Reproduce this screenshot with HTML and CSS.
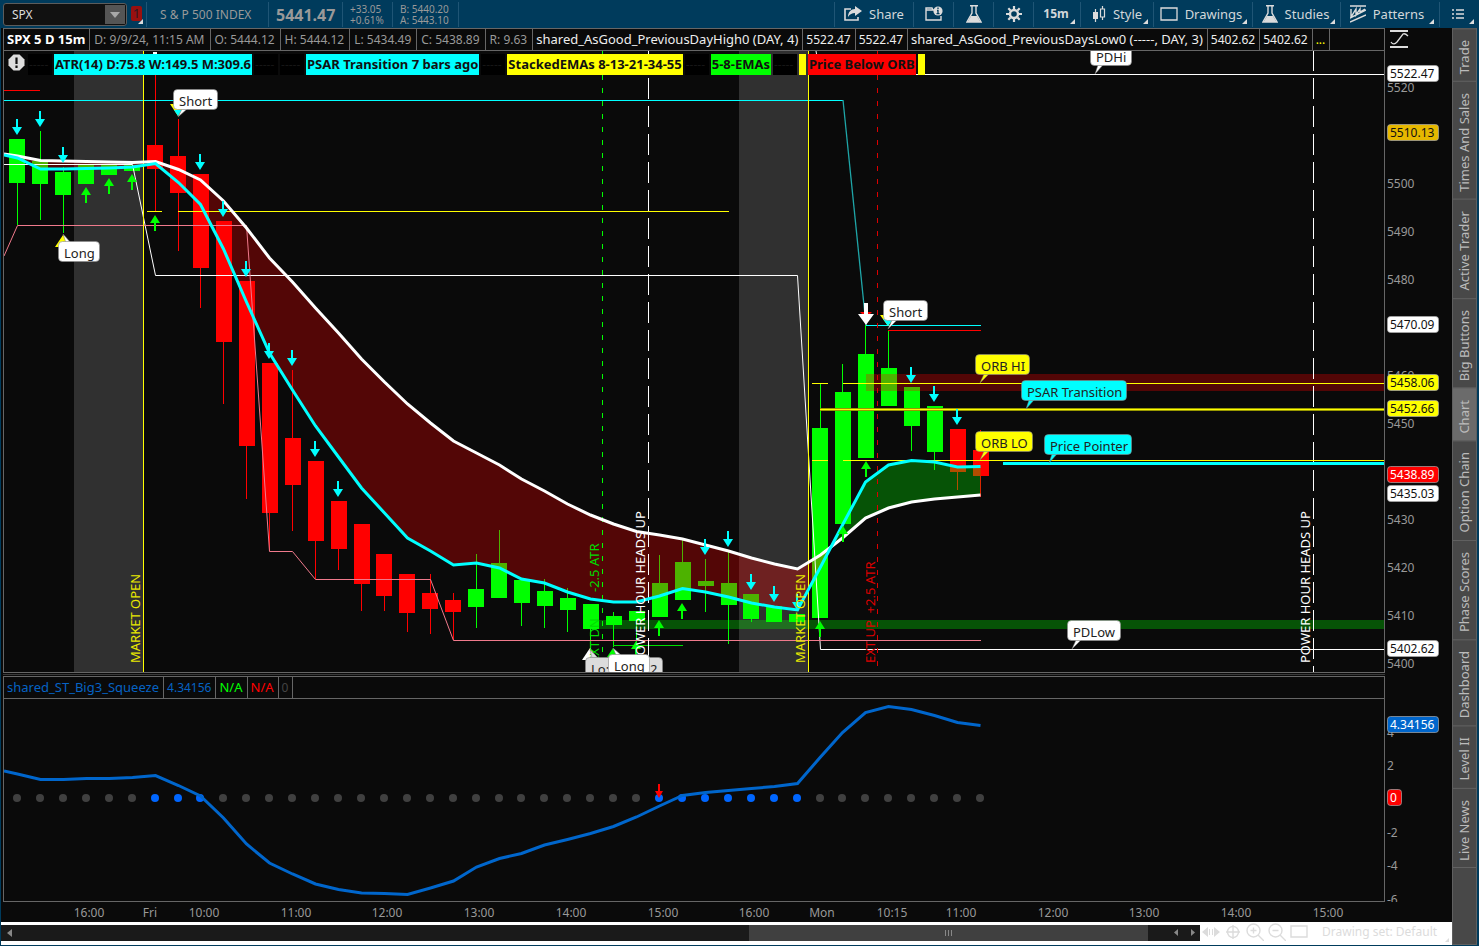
FILE: index.html
```html
<!DOCTYPE html>
<html lang="en">
<head>
<meta charset="utf-8">
<title>SPX Chart</title>
<link rel="stylesheet" href="styles.css">
</head>
<body>
<div class="app">
  <header class="toolbar">
    <div class="symbol-box">
      <input class="symbol-input" aria-label="Symbol" value="SPX">
      <button class="symbol-drop" aria-label="Choose symbol"><svg width="10" height="6"><path d="M0 0h10l-5 6z" fill="#a8a8a8"/></svg></button>
    </div>
    <button class="link-badge corner">1</button>
    <div class="quote name">S &amp; P 500 INDEX</div>
    <div class="quote last">5441.47</div>
    <div class="quote pair"><span>+33.05</span><span>+0.61%</span></div>
    <div class="quote pair"><span>B: 5440.20</span><span>A: 5443.10</span></div>
    <div class="quote spacer"></div>
    <button class="tool share"><svg width="18" height="16" viewBox="0 0 18 16"><path d="M7 3H1v11h13v-3" fill="none" stroke="#dcdcdc" stroke-width="1.6"/><path d="M11 0l7 5-7 5V7C8 7 6 8 4 11c0-5 3-8 7-8z" fill="#dcdcdc"/></svg>Share</button>
    <button class="tool" aria-label="Chart info"><svg width="18" height="16" viewBox="0 0 18 16"><path d="M10 4H8L7 2H1v12h15v-4M1 4h8" fill="none" stroke="#dcdcdc" stroke-width="1.4"/><circle cx="13" cy="5" r="4.6" fill="#dcdcdc"/><path d="M13 1.500v1.500M12 4.500h1v3M11.500 7.700h3" stroke="#003b5c" stroke-width="1.3" fill="none"/></svg></button>
    <button class="tool" aria-label="Studies flask"><svg width="16" height="18" viewBox="0 0 16 18"><path d="M4 .7h8M6 1v7L1 17h14L10 8V1" fill="none" stroke="#dcdcdc" stroke-width="1.4"/><path d="M5 11h6l3.500 6H1.500z" fill="#dcdcdc"/></svg></button>
    <button class="tool" aria-label="Chart settings"><svg width="16" height="16" viewBox="0 0 16 16"><g stroke="#dcdcdc" fill="none"><circle cx="8" cy="8" r="4" stroke-width="2.400"/><path d="M8 0v3M8 13v3M0 8h3M13 8h3M2.300 2.300l2.200 2.200M11.500 11.500l2.200 2.200M2.300 13.700l2.200-2.200M11.500 4.500l2.200-2.200" stroke-width="2.200"/></g></svg></button>
    <button class="tool bold corner frame">15m</button>
    <button class="tool corner style"><svg width="14" height="16" viewBox="0 0 14 16"><path d="M3.500 3v13M10.500 0v3M10.500 11v3" stroke="#dcdcdc" stroke-width="1.200"/><path d="M1 6h5v7H1z" fill="#dcdcdc"/><path d="M8.500 3h4v8h-4z" fill="none" stroke="#dcdcdc" stroke-width="1.200"/></svg>Style</button>
    <button class="tool corner drawings"><svg width="18" height="14" viewBox="0 0 18 14"><path d="M1 1h16v12H1z" fill="none" stroke="#dcdcdc" stroke-width="1.300"/></svg>Drawings</button>
    <button class="tool corner studies"><svg width="16" height="18" viewBox="0 0 16 18"><path d="M4 .7h8M6 1v7L1 17h14L10 8V1" fill="none" stroke="#dcdcdc" stroke-width="1.4"/><path d="M5 11h6l3.500 6H1.500z" fill="#dcdcdc"/></svg>Studies</button>
    <button class="tool corner patterns"><svg width="16" height="18" viewBox="0 0 16 18"><path d="M0 1h16M0 17L16 10M0 13L16 5M1 4v8l5-8v6l4-6v3l5-3" fill="none" stroke="#dcdcdc" stroke-width="1.400"/></svg>Patterns</button>
    <button class="tool corner menu" aria-label="Menu"><svg width="12" height="12" viewBox="0 0 12 12"><path d="M0 2h2M0 6h2M0 10h2M4 2h8M4 6h8M4 10h8" stroke="#dcdcdc" stroke-width="1.500"/></svg></button>
  </header>

  <div class="main">
    <main class="left">
      <div class="workspace">
        <div class="plots">
          <section class="panel">
            <div class="panel-head">
              <span class="strong">SPX 5 D 15m</span><span class="ohlc">D: 9/9/24, 11:15 AM</span><span class="ohlc">O: 5444.12</span><span class="ohlc">H: 5444.12</span><span class="ohlc">L: 5434.49</span><span class="ohlc">C: 5438.89</span><span class="ohlc">R: 9.63</span><span class="white study">shared_AsGood_PreviousDayHigh0 (DAY, 4)</span><span class="white">5522.47</span><span class="white">5522.47</span><span class="white study">shared_AsGood_PreviousDaysLow0 (-----, DAY, 3)</span><span class="white">5402.62</span><span class="white">5402.62</span><span class="yellow">...</span>
            </div>
            <div class="plot">
              <svg id="price" viewBox="4 51 1380 621" role="img" aria-label="SPX 15 minute price chart"></svg>
              <div class="labels">
                <svg width="18" height="18" viewBox="0 0 18 18"><path d="M5.500 0.500h6l5 5v6l-5 5h-6l-5-5v-6z" fill="#dedede"/><path d="M8.500 3.500v6.500M8.500 11.500v2.500" stroke="#111" stroke-width="2.200"/></svg>
                <span class="tag none">-----</span><span class="tag cyan">ATR(14) D:75.8 W:149.5 M:309.6</span><span class="tag none">-----</span><span class="tag none">-----</span><span class="tag cyan">PSAR Transition 7 bars ago</span><span class="tag none">-----</span><span class="tag yel">StackedEMAs 8-13-21-34-55</span><span class="tag none">-----</span><span class="tag grn">5-8-EMAs</span><span class="tag none">-----</span><span class="tag yel bar"></span><span class="tag red">Price Below ORB</span><span class="tag yel bar"></span>
              </div>
            </div>
          </section>
          <div class="splitter"></div>
          <section class="panel">
            <div class="panel-head">
              <span class="blue study">shared_ST_Big3_Squeeze</span><span class="blue">4.34156</span><span class="green study">N/A</span><span class="redtext study">N/A</span><span class="dim">0</span>
            </div>
            <div class="plot"><svg id="squeeze" viewBox="4 699 1380 202" role="img" aria-label="Squeeze momentum"></svg></div>
          </section>
          <svg id="times" class="times" viewBox="3 902 1382 20"></svg>
        </div>
        <svg id="axis" class="axis" viewBox="1385 28 67 894"></svg>
      </div>
      <footer class="footer">
        <div class="scroll">
          <div class="scroll-side"><svg width="5" height="8"><path d="M5 0v8L0 4z" fill="#888"/></svg></div>
          <div class="thumb"><i></i><i></i><i></i></div>
          <div class="scroll-end"><svg width="4" height="8"><path d="M4 0v7L0 3.500z" fill="#888"/></svg><svg width="4" height="8"><path d="M0 0v7l4-3.500z" fill="#888"/></svg></div>
        </div>
        <div class="foot-tools">
          <button aria-label="Pan"><svg width="18" height="18" viewBox="0 0 18 18"><path d="M6 4v10L0 9zM12 4v10l6-5z" fill="#dcdcdc"/><path d="M7.500 6v6M10.500 6v6" stroke="#dcdcdc"/></svg></button>
          <button aria-label="Crosshair"><svg width="18" height="18" viewBox="0 0 18 18"><g fill="none" stroke="#dcdcdc" stroke-width="1.400"><circle cx="9" cy="9" r="5.500"/><path d="M9 2v14M2 9h14"/></g></svg></button>
          <button aria-label="Zoom in"><svg width="18" height="18" viewBox="0 0 18 18"><g fill="none" stroke="#dcdcdc" stroke-width="1.400"><circle cx="7.500" cy="7.500" r="6.500"/><path d="M12 12l6 6M4.500 7.500h6M7.500 4.500v6"/></g></svg></button>
          <button aria-label="Zoom out"><svg width="18" height="18" viewBox="0 0 18 18"><g fill="none" stroke="#dcdcdc" stroke-width="1.400"><circle cx="7.500" cy="7.500" r="6.500"/><path d="M12 12l6 6M4.500 7.500h6"/></g></svg></button>
          <button aria-label="Fit"><svg width="18" height="18" viewBox="0 0 18 18"><path d="M1 3h16v11H1z" fill="none" stroke="#dcdcdc" stroke-width="1.400"/></svg></button>
          <button class="set">Drawing set: Default</button>
          <svg class="grip" width="4" height="4"><path d="M4 0v4H0z" fill="#dcdcdc"/></svg>
        </div>
      </footer>
    </main>
    <nav class="tabs">
      <button>Trade</button><button>Times And Sales</button><button>Active Trader</button><button>Big Buttons</button><button class="on">Chart</button><button>Option Chain</button><button>Phase Scores</button><button>Dashboard</button><button>Level II</button><button>Live News</button>
      <div class="tabs-rest"></div>
    </nav>
  </div>
</div>
<script src="chart.js"></script>
</body>
</html>
```

FILE: styles.css
```css
* { box-sizing: border-box; }
html, body { height: 100%; margin: 0; }
body { background: #003b5c; font: 12px/16px "Noto Sans", sans-serif; color: #999; }
button, input { font: inherit; color: inherit; border: 0; padding: 0; margin: 0; background: none; }
svg { display: block; flex: none; }
.app { display: flex; flex-direction: column; height: 100vh; overflow: hidden; padding: 0 0 1px 1px; }

.toolbar { display: flex; height: 28px; flex: none; align-items: stretch; padding-left: 2px; white-space: nowrap; font-size: 13px; }
.symbol-box { display: flex; flex: none; width: 124px; height: 23px; margin-top: 3px; background: #111; border: 1px solid #5c5c5c; border-radius: 3px; }
.symbol-input { flex: 1; min-width: 0; padding-left: 8px; font-size: 12px; color: #ddd; }
.symbol-drop { width: 20px; background: #555; margin: 1px; display: flex; align-items: center; justify-content: center; }
.link-badge { width: 11px; height: 15px; margin: 6px 4px 0 4px; background: #99100f; color: #2b1a24; border-radius: 2px; line-height: 15px; }
.corner { position: relative; }
.corner::after { content: ""; position: absolute; right: 5px; bottom: 3px; border: solid transparent; border-width: 0 0 5px 5px; border-bottom-color: #dcdcdc; }
.link-badge.corner::after { right: -1px; bottom: -3px; }
.quote { border-left: 1px solid #1f5575; margin: 2px 0 1px; display: flex; flex-direction: column; justify-content: center; }
.name { width: 122px; padding-left: 13px; font-size: 12px; }
.last { width: 74px; padding-left: 7px; font-size: 16px; font-weight: 700; }
.pair { width: 50px; padding-left: 7px; font-size: 10px; line-height: 11px; }
.pair + .pair { width: 66px; }
.spacer { flex: 1; }
.tool { width: 40px; flex: none; display: flex; align-items: center; justify-content: center; gap: 7px; color: #d2d7da; border-left: 1px solid #1f5575; margin: 2px 0 1px; padding-bottom: 2px; }
.share { width: 79px; }
.bold { font-weight: 700; font-size: 12px; }
.frame { width: 47px; padding-right: 2px; }
.style { width: 73px; }
.drawings { width: 99px; padding-right: 4px; }
.studies { width: 88px; padding-right: 2px; }
.patterns { width: 99px; padding-right: 6px; }
.menu { padding-right: 4px; }

.main { flex: 1; min-height: 0; display: flex; margin-right: 2px; }
.left { flex: 1; min-width: 0; display: flex; flex-direction: column; }
.workspace { flex: 1; min-height: 0; display: flex; background: #0a0a0a; }
.plots { flex: 1; min-width: 0; margin-left: 2px; display: grid; grid-template-rows: minmax(0, 645fr) 3px minmax(0, 226fr) 20px; }
.panel { border: 1px solid #666; display: flex; flex-direction: column; min-width: 0; }
.panel-head { height: 22px; flex: none; display: flex; border-bottom: 1px solid #666; white-space: nowrap; overflow: hidden; line-height: 21px; }
.panel-head span { padding: 0 4px 0 3px; border-right: 1px solid #666; }
.panel-head .ohlc { padding: 0 5px 0 4px; }
.panel-head .strong { color: #fff; font-weight: 700; font-size: 13px; }
.panel-head .study { font-size: 13px; }
.white { color: #eee; }
.yellow { color: #ff0; }
.blue { color: #0663c4; }
.green { color: #0f0; }
.redtext { color: #f00; }
.dim { color: #444; }
.plot { position: relative; flex: 1; min-height: 0; }
.plot > svg { width: 100%; height: 100%; }
.splitter { border: solid #0a0a0a; border-width: 1px 0; background: #3a3a3a; }
.times { width: 100%; height: 100%; }
.axis { width: 67px; height: 100%; }
.labels { position: absolute; left: 4px; top: 3px; display: flex; gap: 2px; height: 21px; line-height: 21px; white-space: nowrap; font-weight: 700; font-size: 13px; color: #111; }
.tag { padding: 0 1px; }
.none { width: 24px; background: #000; color: #161616; font-weight: 400; font-size: 12px; overflow: hidden; }
.cyan { background: #0ff; }
.yel { background: #ff0; }
.grn { background: #0f0; }
.red { background: #f00; }
.bar { width: 7px; padding: 0; }
svg text { font-family: "Noto Sans", sans-serif; font-size: 12px; fill: #999; }
svg .note { font-size: 13px; }

.footer { height: 23px; flex: none; background: #fff; display: flex; align-items: stretch; }
.scroll { flex: 1; margin: 3px 0 4px; background: #1a1a1a; display: flex; }
.scroll-side { flex: 742; display: flex; align-items: center; padding-left: 6px; }
.thumb { flex: 399; background: #404040; display: flex; align-items: center; justify-content: center; gap: 2px; }
.thumb i { width: 1px; height: 6px; background: #888; }
.scroll-end { width: 52px; display: flex; align-items: center; justify-content: flex-end; gap: 13px; padding-right: 5px; }
.foot-tools { flex: none; width: 252px; display: flex; align-items: center; gap: 4px; padding: 0 3px 3px 2px; color: #dcdcdc; font-size: 12px; white-space: nowrap; }
.foot-tools .set { margin-left: 10px; }
.grip { align-self: flex-end; margin-left: auto; }

.tabs { width: 25px; flex: none; display: flex; flex-direction: column; background: #484848; border: solid #5f5f5f; border-width: 0 1px 1px; }
.tabs button { writing-mode: vertical-rl; transform: rotate(180deg); padding: 7px 2px 11px; width: 100%; line-height: 19px; font-size: 13px; color: #bbb; border-bottom: 1px solid #626262; }
.tabs .on { background: #6b6b6b; }
.tabs-rest { flex: 1; border-top: 1px solid #626262; }
```

FILE: chart.js
```js
const NS = 'http://www.w3.org/2000/svg';
const add = (host, tag, attrs, text) => {
  const node = document.createElementNS(NS, tag);
  for (const key in attrs) node.setAttribute(key, attrs[key]);
  if (text !== undefined) node.textContent = text;
  host.appendChild(node);
  return node;
};
const px = i => Math.round(17 + 22.93 * i);
const price = document.getElementById('price');
const rect = (h, x, y, w, height, fill, extra) => add(h, 'rect', { x, y, width: w, height, fill, ...extra });
const line = (h, points, stroke, width = 1, extra) =>
  add(h, 'polyline', { points, fill: 'none', stroke, 'stroke-width': width, ...extra });

/* sessions */
rect(price, 74, 51, 69, 621, '#303030');
rect(price, 739, 51, 69, 621, '#303030');

/* candles: top, bottom, high, low */
const G = '#0f0', R = '#f00';
const candles = [
  [139,183,139,225,G],[161,184,131,220,G],[172,195,167,233,G],[165,184,165,184,G],[165,175,165,175,G],[165,171,165,171,G],
  [145,169,54,211,R],[156,193,119,251,R],[174,268,174,308,R],[221,342,221,404,R],[281,446,281,499,R],[363,513,363,551,R],
  [438,485,370,531,R],[461,541,461,579,R],[501,549,501,570,R],[524,584,524,611,R],[554,596,554,611,R],[574,613,574,632,R],
  [593,609,574,634,R],[600,612,593,640,R],[589,607,554,628,G],[563,598,530,598,G],[580,603,580,626,G],[591,606,579,628,G],
  [598,610,588,632,G],[604,629,604,653,G],[616,625,612,647,G],[611,621,611,642,G],[583,617,555,617,G],[562,600,539,600,G],
  [581,586,559,612,G],[583,605,552,644,G],[594,619,594,622,G],[606,622,606,622,G],[614,622,614,622,G],[428,618,384,618,G],
  [392,524,364,524,G],[354,458,325,458,G],[368,406,330,406,G],[387,426,387,451,G],[406,452,406,470,G],[429,472,429,490,R],
  [450,476,430,497,R]
];
candles.forEach(([t, b, h, l, c], i) => {
  rect(price, px(i), h, 1, l - h, c);
  rect(price, Math.round(9.4 + 22.94 * i), t, 16, b - t, c);
});

/* zones */
rect(price, 866, 374, 518, 17, '#f00', { opacity: 0.3 });
rect(price, 590, 620, 794, 9, '#0f0', { opacity: 0.3 });

/* moving averages and the cloud between them */
const slow = [156,160.5,161,161.5,162,162.5,161.5,169.5,180,201,228,258,282,308,333,359,382,404,423,441,453,465,479,491,504,515,524,531.5,535,539,545,551,558,564,569,555,538,518,508,502,499,497,495];
const fast = [158,169,169,168.5,168,167,163.5,182.5,204.5,249,302,353,390,426,457,488,513,538,551,565,563,568,579,583,592,599,602,602,596,588.5,592,597,603,607,610,567,525,482,465,460.5,462,467,466.5];
const pts = (arr, from = 0, to = arr.length) => arr.slice(from, to).map((y, k) => [px(k + from) + 0.5, y]);
add(price, 'polygon', { points: [[4,154], ...pts(slow, 0, 36), [831,547], ...pts(fast, 0, 36).reverse(), [4,155]].join(' '), fill: '#f00', opacity: 0.3 });
add(price, 'polygon', { points: [[831,547], ...pts(slow, 36), ...pts(fast, 36).reverse()].join(' '), fill: '#0f0', opacity: 0.3 });

/* levels */
line(price, '4,90.5 40,90.5', '#f00');
line(price, '4,100.5 843,100.5', '#0ff');
line(price, '843,100 866,325', '#1fa6a8', 1.3);
line(price, '866,325.5 981,325.5', '#0ff');
line(price, '888,330.5 981,330.5', '#f00');
line(price, '816,51 820,74.5 1384,74.5', '#fff');
line(price, '4,164.5 132.5,164.5 155.5,275.5 797.5,275.5 820.5,649.5 1384,649.5', '#fff');
line(price, '4,256 17.5,225.5 246.5,225.5 269.5,551.5 292.5,551.5 315.5,579.5 430.5,579.5 453.5,640.5 981,640.5', '#f07a8c');
line(price, '147,211.5 162,211.5', '#ff0');
line(price, '178,211.5 729,211.5', '#ff0');
line(price, '613,645.5 683,645.5', '#0d0');
line(price, '143.5,51 143.5,672', '#ff0');
line(price, '808.5,51 808.5,672', '#ff0');
line(price, '602.5,51 602.5,672', '#0f0', 1, { 'stroke-dasharray': '5 8', 'stroke-dashoffset': 2 });
line(price, '877.5,297 877.5,672', '#d00', 1, { 'stroke-dasharray': '5 8' });
line(price, '877.5,51 877.5,290', '#d00', 1, { 'stroke-dasharray': '5 8', 'stroke-dashoffset': 2 });
line(price, '648.5,50 648.5,672', '#fff', 1, { 'stroke-dasharray': '21 7' });
line(price, '1313.5,50 1313.5,672', '#fff', 1, { 'stroke-dasharray': '21 7' });
line(price, '812,383.5 828,383.5', '#ff0');
line(price, '843,383.5 1384,383.5', '#ff0');
line(price, '812,460.5 828,460.5', '#ff0');
line(price, '843,460.5 1384,460.5', '#ff0');
line(price, '820,409.5 1384,409.5', '#989800', 3);
line(price, '820,409.5 1384,409.5', '#ff0');
line(price, '1003,463.5 1384,463.5', '#0ff', 3);
rect(price, 153, 52, 4, 3, '#fff');

line(price, [[4,154], ...pts(slow)].join(' '), '#fff', 3);
line(price, [[4,155], ...pts(fast)].join(' '), '#0ff', 3);

/* signal arrows */
const down = (h, x, y, c) => add(h, 'path', { d: `M${x-1} ${y-16}h2v8h4l-5 8l-5-8h4z`, fill: c });
const up = (h, x, y, c) => add(h, 'path', { d: `M${x} ${y}l5 8h-4v8h-2v-8h-4z`, fill: c });
[[17,135],[40,127],[63,163],[200,170],[223,217],[246,277],[269,359],[292,366],[315,457],[338,497],[705,555],[728,547],[751,590],[774,602],[797,610],[911,383],[934,402],[957,425]]
  .forEach(([x, y]) => down(price, x, y, '#0ff'));
[[86,187],[109,178],[132,174],[155,215],[636,641],[659,620],[682,603],[820,621],[843,526],[866,461]]
  .forEach(([x, y]) => up(price, x, y, '#0f0'));
const tri = (points, fill) => add(price, 'polygon', { points, fill });
tri('860,312 872,312 866,318', '#f00');
tri('864,303 868,303 868,314 874,314 866,325 858,314 864,314', '#fff');
tri('170,104 186,104 178,116', '#ff0');
tri('174,110 182,110 178,116', '#0ff');
tri('63,235 72,247 55,247', '#ff0');
tri('880,315 896,315 888,326', '#ff0');
tri('883,319 893,319 888,326', '#0ff');
tri('590,648 599,660 582,660', '#fff');
tri('613,648 619,657 607,657', '#0f0');

/* vertical captions */
const vtext = (x, y, c, t) => add(price, 'text', { transform: `translate(${x} ${y}) rotate(-90)`, class: 'note', style: `fill:${c}` }, t);
vtext(140, 663, '#e8e800', 'MARKET OPEN');
vtext(805, 663, '#e8e800', 'MARKET OPEN');
vtext(645, 663, '#fff', 'POWER HOUR HEADS UP');
vtext(1310, 663, '#fff', 'POWER HOUR HEADS UP');
vtext(875, 663, '#d00', 'EXT UP\u00a0 +2.5 ATR');
vtext(599, 663, '#0d0', 'EXT DN');
vtext(599, 592, '#0d0', '-2.5 ATR');

/* callouts: box, pointer, caption */
const bubble = (x, y, w, tail, fill, text) => {
  add(price, 'polygon', { points: tail, fill, stroke: '#777', 'stroke-width': 0.5 });
  rect(price, x + 0.5, y + 0.5, w - 1, 20, fill, { rx: 4, stroke: '#888', 'stroke-opacity': 0.6 });
  add(price, 'text', { x: x + 6, y: y + 17, class: 'note', style: 'fill:#222' }, text);
};
bubble(173, 89, 45, '182,109 187,109 178,117', '#fff', 'Short');
bubble(58, 241, 42, '66,243 71,243 63,234', '#fff', 'Long');
bubble(883, 300, 45, '892,320 897,320 888,329', '#fff', 'Short');
bubble(1090, 45, 42, '1098,65 1103,65 1095,74', '#fff', 'PDHi');
bubble(975, 354, 55, '984,374 989,374 980,383', '#ff0', 'ORB HI');
bubble(1021, 380, 106, '1029,400 1034,400 1026,409', '#0ff', 'PSAR Transition');
bubble(975, 431, 58, '984,451 989,451 980,460', '#ff0', 'ORB LO');
bubble(1044, 434, 88, '1052,454 1057,454 1049,463', '#0ff', 'Price Pointer');
bubble(1067, 620, 54, '1076,640 1081,640 1072,649', '#fff', 'PDLow');
bubble(585, 657, 78, '592,658 598,658 590,650', '#dcdcdc', 'Lo:');
add(price, 'text', { x: 650, y: 674, class: 'note', style: 'fill:#222' }, '2');
bubble(608, 654, 42, '616,655 621,655 613,648', '#fff', 'Long');

/* squeeze study */
const squeeze = document.getElementById('squeeze');
const momentum = [774,779.5,779.5,778.5,778.5,777.5,775.5,785.5,796,818,844,863,874,884,889.5,893,893.5,894.5,888,881,867,858.5,853.5,845,839.5,833.5,826.5,817,806,795.5,792.5,790.5,788.5,786.5,783.5,757,732.5,712.5,706.5,709.5,715.5,722.5,725.5];
momentum.forEach((_, i) => {
  const hot = (i >= 6 && i <= 8) || (i >= 28 && i <= 34);
  add(squeeze, 'circle', { cx: px(i), cy: 798, r: 4, fill: hot ? '#0066ff' : '#404040' });
});
line(squeeze, [[4,771], ...pts(momentum)].join(' '), '#0066cc', 3);
add(squeeze, 'path', { d: 'M658 784h2v7h3l-4 7l-4-7h3z', fill: '#f00' });

/* time axis */
const times = document.getElementById('times');
[[89,'16:00'],[150,'Fri'],[204,'10:00'],[296,'11:00'],[387,'12:00'],[479,'13:00'],[571,'14:00'],[663,'15:00'],[754,'16:00'],[822,'Mon'],[892,'10:15'],[961,'11:00'],[1053,'12:00'],[1144,'13:00'],[1236,'14:00'],[1328,'15:00']]
  .forEach(([x, t]) => add(times, 'text', { x, y: 917, 'text-anchor': 'middle' }, t));

/* value axis */
const axis = document.getElementById('axis');
add(axis, 'path', { d: 'M1390 31h18M1390 47h18', stroke: '#ddd', 'stroke-width': 2 });
add(axis, 'path', { d: 'M1391 42c2 3 4 2 6 0l6-8c2-1 3 0 5 2', fill: 'none', stroke: '#ddd', 'stroke-width': 1.3 });
[[5520,87],[5500,183],[5490,231],[5480,279],[5460,375],[5450,423],[5430,519],[5420,567],[5410,615],[5400,663],[4,732],[2,765],[-2,832],[-4,865],[-6,899]]
  .forEach(([t, y]) => add(axis, 'text', { x: 1387, y: y + 5 }, t));
rect(axis, 1385, 902, 67, 20, '#0a0a0a');
[[73,'#fff','5522.47'],[132,'#e6b800','5510.13'],[324,'#fff','5470.09'],[382,'#ff0','5458.06'],[408,'#ff0','5452.66'],[474,'#f00','5438.89'],[493,'#fff','5435.03'],[648,'#fff','5402.62'],[724,'#0066cc','4.34156'],[797,'#f00','0']]
  .forEach(([y, c, t]) => {
    rect(axis, 1387.5, y - 7.5, t.length > 1 ? 51 : 14, 16, c, { rx: 3, stroke: '#aaa', 'stroke-opacity': 0.7 });
    add(axis, 'text', { x: 1390, y: y + 5, style: `fill:${c === '#f00' || c === '#0066cc' ? '#fff' : '#111'}` }, t);
  });
```
